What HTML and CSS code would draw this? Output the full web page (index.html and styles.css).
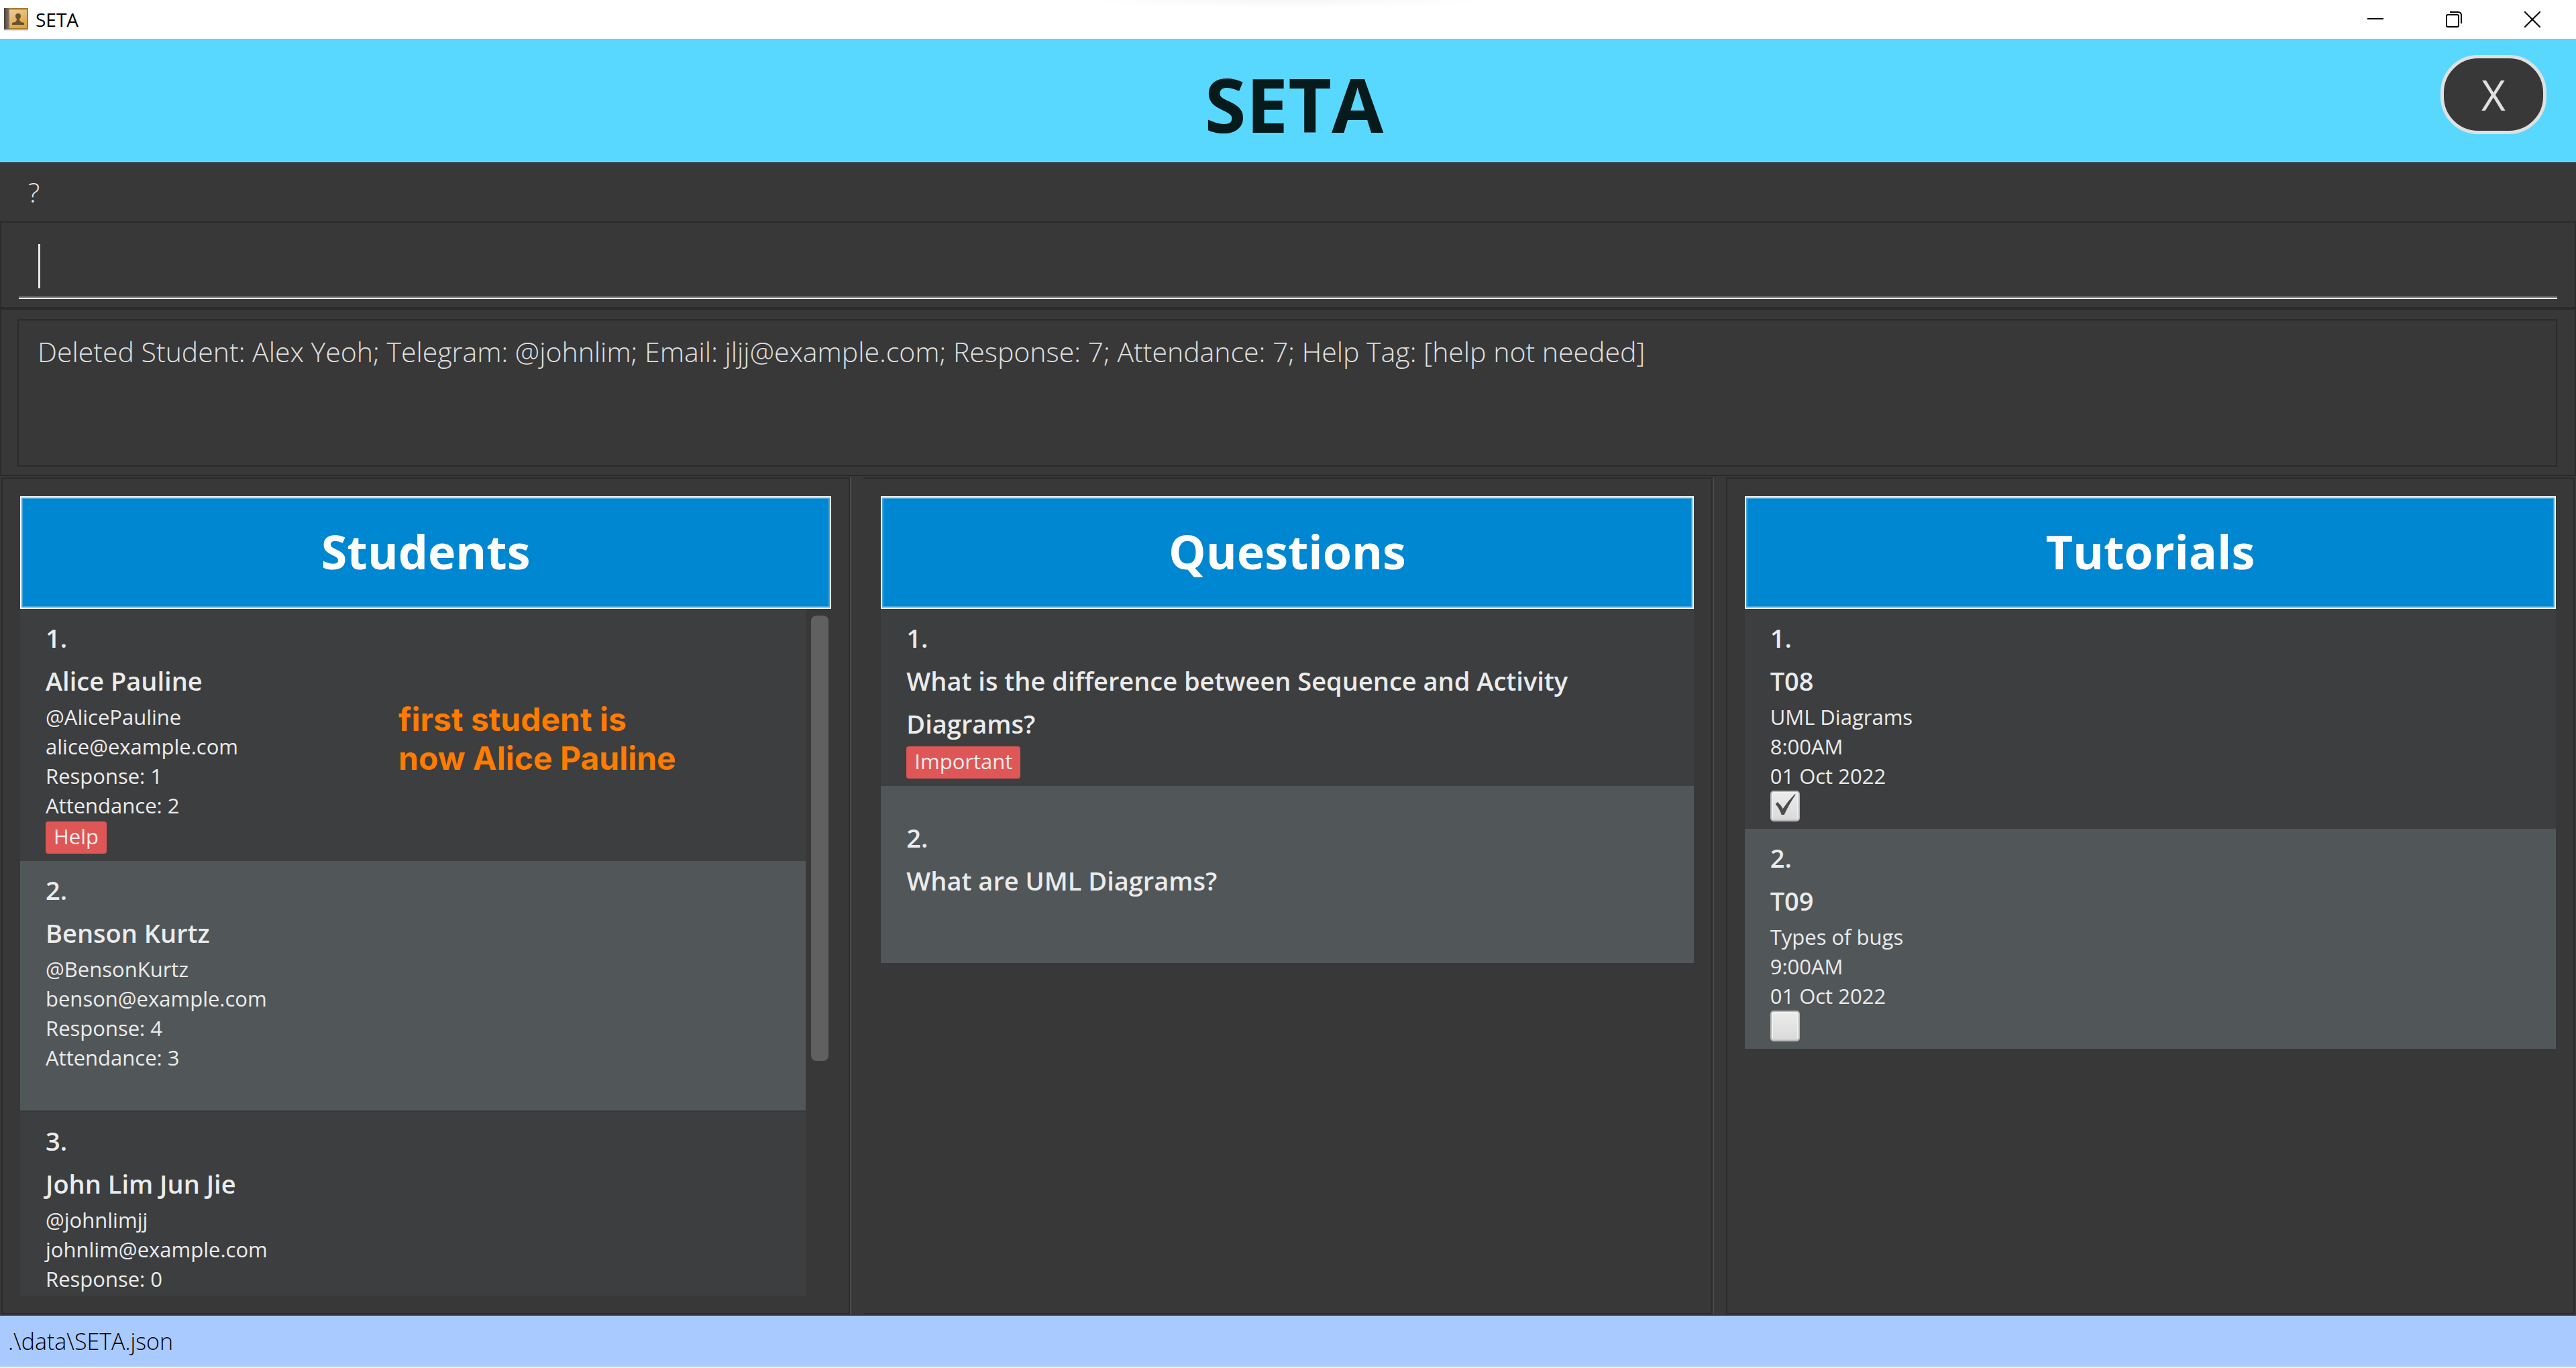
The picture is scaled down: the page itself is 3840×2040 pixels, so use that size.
FILE: index.html
```html
<!DOCTYPE html>
<html lang="en">
<head>
<meta charset="utf-8">
<title>SETA</title>
<link rel="stylesheet" href="styles.css">
</head>
<body>
<div class="titlebar">
  <svg class="app-icon" viewBox="0 0 36 34" aria-hidden="true">
    <defs>
      <linearGradient id="cover" x1="0" y1="0" x2="0.4" y2="1"><stop offset="0" stop-color="#ebcf9c"/><stop offset="1" stop-color="#dfa544"/></linearGradient>
      <linearGradient id="spine" x1="0" y1="0" x2="1" y2="0"><stop offset="0" stop-color="#4b403e"/><stop offset="1" stop-color="#8b7a6c"/></linearGradient>
    </defs>
    <rect x="0" y="31" width="36" height="3" fill="#e6e6e6"/>
    <rect x="0" y="0" width="36" height="32" fill="#a87827"/>
    <rect x="0" y="0" width="8" height="32" fill="url(#spine)"/>
    <rect x="8" y="2" width="26" height="28" fill="url(#cover)"/>
    <rect x="8" y="1" width="27" height="2" fill="#c99a48"/>
    <path d="M21 8q4 0 4 4 0 3-2 4 0 4 3 5l4 1v3H12v-3l4-1q3-1 3-5-2-1-2-4 0-4 4-4z" fill="#6a5230"/>
  </svg>
  <span class="app-name">SETA</span>
  <div class="window-controls">
    <button type="button" aria-label="Minimize"><svg viewBox="0 0 24 24"><path d="M0 11h24" stroke="#000" stroke-width="2"/></svg></button>
    <button type="button" aria-label="Restore"><svg viewBox="0 0 24 24" fill="none" stroke="#000" stroke-width="2"><rect x="1" y="5" width="18" height="18" rx="2"/><path d="M6 1h12q5 0 5 5v12"/></svg></button>
    <button type="button" aria-label="Close"><svg viewBox="0 0 24 24" stroke="#000" stroke-width="2"><path d="M0 0l24 24M24 0L0 24"/></svg></button>
  </div>
</div>

<header class="banner">
  <h1>SETA</h1>
  <button type="button" class="exit">X</button>
</header>

<nav class="menubar"><button type="button">?</button></nav>

<section class="command">
  <input type="text" aria-label="Command">
  <span class="caret"></span>
</section>

<section class="result">
  <output>Deleted Student: Alex Yeoh; Telegram: @johnlim; Email: jljj@example.com; Response: 7; Attendance: 7; Help Tag: [help not needed]</output>
</section>

<main class="panes">
  <section class="pane">
    <h2>Students</h2>
    <div class="list scrollable">
      <ul>
        <li class="card">
          <h3>1.</h3>
          <h3>Alice Pauline</h3>
          <p>@AlicePauline</p>
          <p>alice@example.com</p>
          <p>Response: 1</p>
          <p>Attendance: 2</p>
          <div class="tags"><span class="tag">Help</span></div>
          <div class="note">first student is<br>now Alice Pauline</div>
        </li>
        <li class="card">
          <h3>2.</h3>
          <h3>Benson Kurtz</h3>
          <p>@BensonKurtz</p>
          <p>benson@example.com</p>
          <p>Response: 4</p>
          <p>Attendance: 3</p>
          <div class="tags"></div>
        </li>
        <li class="card">
          <h3>3.</h3>
          <h3>John Lim Jun Jie</h3>
          <p>@johnlimjj</p>
          <p>johnlim@example.com</p>
          <p>Response: 0</p>
        </li>
      </ul>
      <div class="scrollbar"><div class="thumb"></div></div>
    </div>
  </section>

  <div class="divider"></div>

  <section class="pane middle">
    <h2>Questions</h2>
    <div class="list">
      <ul>
        <li class="card question">
          <h3>1.</h3>
          <h3>What is the difference between Sequence and Activity<br>Diagrams?</h3>
          <div class="tags"><span class="tag">Important</span></div>
        </li>
        <li class="card question">
          <h3>2.</h3>
          <h3>What are UML Diagrams?</h3>
          <div class="tags"></div>
        </li>
      </ul>
    </div>
  </section>

  <div class="divider"></div>

  <section class="pane">
    <h2>Tutorials</h2>
    <div class="list">
      <ul>
        <li class="card">
          <h3>1.</h3>
          <h3>T08</h3>
          <p>UML Diagrams</p>
          <p>8:00AM</p>
          <p>01 Oct 2022</p>
          <input type="checkbox" aria-label="T08 done" checked>
        </li>
        <li class="card">
          <h3>2.</h3>
          <h3>T09</h3>
          <p>Types of bugs</p>
          <p>9:00AM</p>
          <p>01 Oct 2022</p>
          <input type="checkbox" aria-label="T09 done">
        </li>
      </ul>
    </div>
  </section>
</main>

<footer class="statusbar">.\data\SETA.json</footer>
</body>
</html>
```

FILE: styles.css
```css
* {
  box-sizing: border-box;
}

body {
  margin: 0;
  height: 100vh;
  display: flex;
  flex-direction: column;
  overflow: hidden;
  background: #383838;
  color: #ebebeb;
  font-family: "Open Sans", "Noto Sans", sans-serif;
}

h1, h2, h3, p, ul {
  margin: 0;
  padding: 0;
  list-style: none;
}

button {
  padding: 0;
  border: 0;
  background: none;
  color: inherit;
  font-family: inherit;
}

/* Window title bar */
.titlebar {
  display: flex;
  align-items: center;
  gap: 11px;
  height: 58px;
  padding: 0 7px 0 6px;
  background: radial-gradient(ellipse 300px 12px at 50% 0, #f6f6f6, #fff);
  color: #000;
  font-size: 28px;
}

.app-icon {
  width: 36px;
  height: 34px;
}

.window-controls {
  display: flex;
  height: 100%;
  margin-left: auto;
}

.window-controls button {
  display: grid;
  place-items: center;
  width: 117px;
}

.window-controls svg {
  width: 24px;
  height: 24px;
}

/* Banner */
.banner {
  display: grid;
  grid-template-columns: 1fr auto 1fr;
  align-items: start;
  padding: 24px 44px 14px 62px;
  background: #59d8ff;
}

.banner h1 {
  grid-column: 2;
  color: #071a1c;
  font-size: 112px;
  line-height: 146px;
}

.exit {
  justify-self: end;
  width: 158px;
  height: 118px;
  border: 5px solid #e0e0e0;
  border-radius: 56px;
  background: #383838;
  color: #e0e0e0;
  font-size: 62px;
}

/* Menu */
.menubar {
  display: flex;
  padding: 0 42px;
}

.menubar button {
  font-size: 41px;
  font-weight: 300;
  line-height: 88px;
}

/* Command box and result display */
.command,
.result {
  border: 2px solid #2b2b2b;
}

.command {
  position: relative;
  padding: 14px 26px 12px;
}

.command input {
  display: block;
  width: 100%;
  height: 100px;
  padding: 0 28px;
  border: 0;
  border-bottom: 2px solid #fff;
  box-shadow: inset 0 -2px #717171;
  outline: 0;
  background: transparent;
  color: #fff;
  font: 300 41px "Open Sans", sans-serif;
}

.caret {
  position: absolute;
  top: 32px;
  left: 55px;
  width: 3px;
  height: 66px;
  background: #e6e6e6;
}

.result {
  padding: 14px 26px 12px 24px;
}

.result output {
  display: block;
  height: 220px;
  padding: 18px 28px;
  border: 2px solid #2b2b2b;
  color: #e0e0e0;
  font-size: 41px;
  font-weight: 300;
  line-height: 56px;
}

/* Three panes */
.panes {
  flex: 1;
  min-height: 0;
  display: grid;
  grid-template-columns: 1fr 20px 1fr 20px 1fr;
  padding: 2px;
}

.pane {
  display: flex;
  flex-direction: column;
  min-width: 0;
  min-height: 0;
  padding: 26px;
  border: 2px solid #2b2b2b;
}

.middle {
  border-left: 0;
}

.divider {
  border-left: 2px solid #4c4c4c;
}

.pane h2 {
  padding-bottom: 4px;
  border: 2px solid #fff;
  box-shadow: inset 0 0 0 2px #40a5dd;
  background: #0087d1;
  color: #fff;
  font-size: 70px;
  line-height: 160px;
  text-align: center;
}

.list {
  flex: 1;
  min-height: 0;
  overflow: hidden;
}

.scrollable {
  display: grid;
  grid-template-columns: 1fr 38px;
}

.scrollable ul {
  display: flex;
  flex-direction: column;
}

.card {
  position: relative;
  padding: 11px 38px;
  background: #3c3e3f;
}

.card:nth-child(even) {
  background: #515658;
}

.card:nth-child(3) {
  flex: 1;
  border-top: 2px solid #383838;
}

.card h3 {
  font-size: 38px;
  font-weight: 600;
  line-height: 64px;
}

.card p {
  font-size: 31px;
  line-height: 44px;
}

.tags {
  display: flex;
  min-height: 46px;
  padding-top: 2px;
}

.tag {
  padding: 0 12px 4px;
  border-radius: 4px;
  background: #df5656;
  font-size: 31px;
  line-height: 44px;
}

.question {
  display: flex;
  flex-direction: column;
  justify-content: center;
  min-height: 264px;
}

.note {
  position: absolute;
  top: 136px;
  left: 564px;
  color: #ff7c00;
  font: 700 48px/58px "Inter", sans-serif;
}

.scrollbar {
  padding: 10px 4px 0 8px;
}

.thumb {
  height: 65%;
  border-radius: 8px;
  background: #606060;
}

/* Tick boxes */
.card input {
  appearance: none;
  display: block;
  width: 44px;
  height: 46px;
  margin: 0;
  border: 2px solid #b8b8b8;
  border-radius: 5px;
  box-shadow: inset 0 -2px #cfcfcf, inset 0 0 0 2px #f0f0f0;
  background: linear-gradient(#ececec, #dadada);
}

.card input:checked::before {
  content: "";
  display: block;
  width: 40px;
  height: 42px;
  background: #4c4c4c;
  clip-path: path("M6 18 L9 15 Q14 19 17 25 Q25 13 35 3 L36 4 Q27 17 19 34 H15 Q12 25 6 18 Z");
}

/* Status bar */
.statusbar {
  padding: 0 12px;
  border-bottom: 2px solid #eef3fc;
  background: #a9caff;
  color: #000;
  font-size: 34px;
  font-weight: 300;
  line-height: 76px;
}
```
